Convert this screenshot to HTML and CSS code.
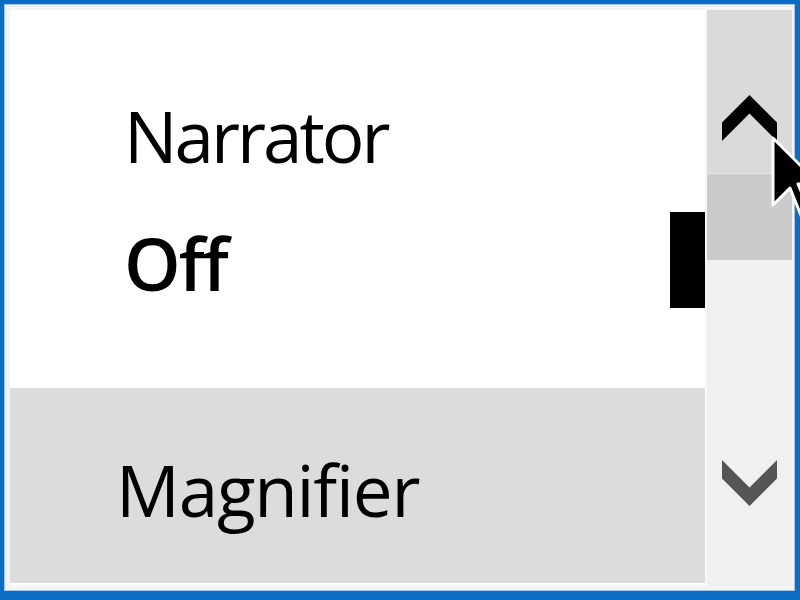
FILE: index.html
```html
<!DOCTYPE html>
<html lang="en">
  <head>
    <meta charset="UTF-8" />
    <meta name="viewport" content="width=device-width, initial-scale=1.0" />
    <title>Ease of Access</title>
    <link rel="stylesheet" href="styles.css">
  </head>
  <body>
    <div class="frame">
      <div class="pane">
        <div class="list">
          <div class="item item-selected">
            <div class="item-text">
              <div class="item-title">Narrator</div>
              <div class="item-value">Off</div>
            </div>
            <div class="toggle-edge"></div>
          </div>
          <div class="item item-next">
            <div class="item-title item-title-wide">Magnifier</div>
          </div>
        </div>
        <div class="scrollbar">
          <div class="scroll-btn scroll-up">
            <svg width="56" height="48" viewBox="0 0 56 48">
              <polygon points="27.5,0 55,27.5 55,46 27.5,18.5 0,46 0,27.5" fill="#000" />
            </svg>
          </div>
          <div class="scroll-thumb"></div>
          <div class="scroll-track">
            <svg width="56" height="48" viewBox="0 0 56 48">
              <polygon points="0,0 27.5,27.5 55,0 55,18.5 27.5,46 0,18.5" fill="#555" />
            </svg>
          </div>
        </div>
      </div>
    </div>

    <!-- mouse pointer over the scroll up button -->
    <svg class="cursor" width="60" height="90" viewBox="0 0 60 90">
      <path d="M3 3 L3 70 L20 53 L32 83 L41 79 L28 49 L49 49 Z"
            fill="#000" stroke="#fff" stroke-width="3" stroke-linejoin="round" />
    </svg>
  </body>
</html>
```

FILE: styles.css
```css
html,
body {
  margin: 0;
  width: 800px;
  height: 600px;
  overflow: hidden;
}

body {
  background-color: #0b6cc4;
  font-family: "Open Sans", "Noto Sans", sans-serif;
  color: #000000;
  position: relative;
}

.frame {
  margin: 4px 5px 7px 4px;
  height: 587px;
  box-sizing: border-box;
  border: 1px solid #a3c6ea;
  background-color: #f4f4f4;
  padding: 5px 2px 4px 5px;
}

.pane {
  display: flex;
  height: 100%;
}

.list {
  flex: 1;
  display: flex;
  flex-direction: column;
  border-bottom: 3px solid #ffffff;
}

.item {
  box-sizing: border-box;
}

.item-selected {
  height: 378px;
  background-color: #ffffff;
  display: flex;
  justify-content: space-between;
}

.item-text {
  padding: 90px 0 0 114px;
}

.item-title {
  font-size: 71px;
  line-height: 72px;
  letter-spacing: -3px;
}

.item-title-wide {
  letter-spacing: -1.2px;
}

.item-value {
  font-size: 72px;
  line-height: 72px;
  font-weight: 600;
  letter-spacing: -2px;
  margin-top: 55px;
}

.toggle-edge {
  width: 35px;
  height: 96px;
  margin-top: 202px;
  background-color: #000000;
}

.item-next {
  flex: 1;
  background-color: #dcdcdc;
  padding: 66px 0 0 106px;
}

.scrollbar {
  width: 87px;
  display: flex;
  flex-direction: column;
  border-left: 2px solid #f7f7f7;
  box-sizing: border-box;
}

.scroll-btn,
.scroll-track {
  display: flex;
  justify-content: center;
}

.scroll-up {
  height: 164px;
  background-color: #dadada;
  padding-top: 85px;
  box-sizing: border-box;
  border-bottom: 1px solid #e4e4e4;
}

.scroll-thumb {
  height: 86px;
  background-color: #cbcbcb;
}

.scroll-track {
  flex: 1;
  background-color: #f0f0f0;
  padding-top: 200px;
}

.cursor {
  position: absolute;
  left: 770px;
  top: 135px;
}
```
